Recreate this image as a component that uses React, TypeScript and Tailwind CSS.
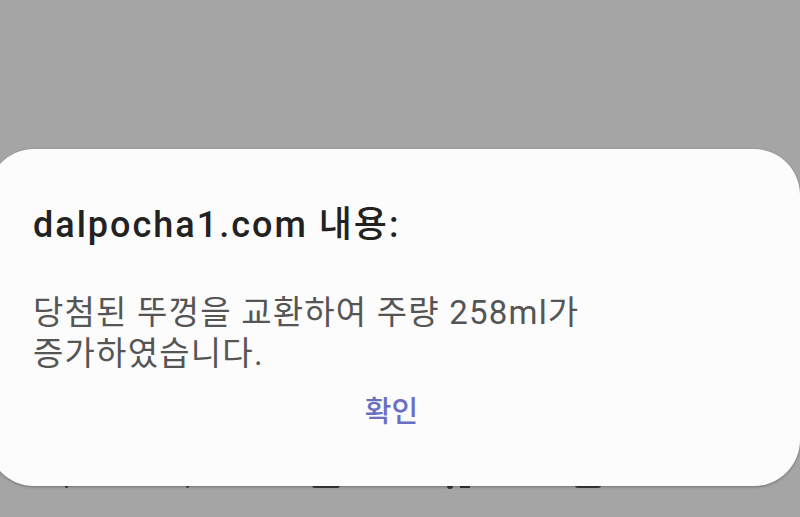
const latin = "font-['Roboto','Noto_Sans_CJK_KR',sans-serif]";

function Specks() {
	// bits of the page behind the dialog that peek out under its bottom edge
	return (
		<div className="flex h-[4px] items-start">
			<span className="ml-[65px] h-[3px] w-[3px] rounded-full bg-[#333]" />
			<span className="ml-[118px] h-[3px] w-[3px] rounded-full bg-[#444]" />
			<span className="ml-[123px] h-[3px] w-[28px] rounded-b-sm bg-[#3a3a3a]" />
			<span className="ml-[107px] h-[4px] w-[6px] rounded-b-sm bg-[#333]" />
			<span className="ml-[7px] h-[3px] w-[10px] bg-[#333]" />
			<span className="ml-[105px] h-[3px] w-[26px] rounded-b-sm bg-[#3a3a3a]" />
		</div>
	);
}

export default function App() {
	return (
		<div className={`flex h-[517px] w-[800px] flex-col overflow-hidden bg-[#a5a5a5] pt-[149px] ${latin}`}>
			<div className="relative z-10 -ml-[12px] flex h-[337px] w-[812px] shrink-0 flex-col rounded-[46px] bg-[#fcfcfc] pl-[45px] shadow-[0_1px_3px_rgba(0,0,0,0.3)]">
				<h1 className="mt-[56px] text-[36px] leading-[40px] font-medium tracking-[2px] text-[#222]">
					dalpocha1.com 내용:
				</h1>
				<p className="mt-[47px] text-[33px] leading-[41px] tracking-[1.2px] text-[#555]">
					당첨된 뚜껑을 교환하여 주량 258ml가
					<br />
					증가하였습니다.
				</p>
				<div className="mt-[18px] flex justify-center pr-[50px]">
					<button
						type="button"
						className="text-[29px] leading-[40px] font-medium text-[#6a6fc4]"
					>
						확인
					</button>
				</div>
			</div>
			<div className="-mt-[1px]">
				<Specks />
			</div>
		</div>
	);
}
